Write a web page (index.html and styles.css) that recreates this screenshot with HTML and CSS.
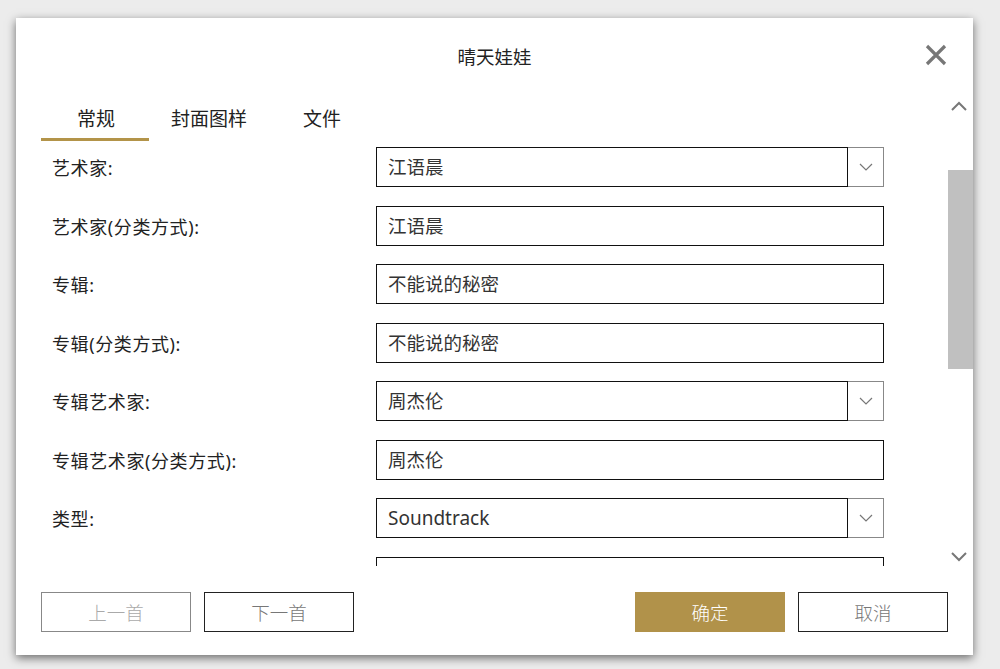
FILE: index.html
```html
<!DOCTYPE html>
<html lang="zh-CN">
<head>
  <meta charset="UTF-8" />
  <meta name="viewport" content="width=device-width, initial-scale=1.0" />
  <title>晴天娃娃</title>
  <link rel="stylesheet" href="styles.css">
</head>
<body>
  <div class="dialog">
    <div class="header">
      <div class="title">晴天娃娃</div>
      <div class="close">
        <svg width="22" height="22" viewBox="0 0 22 22"><path d="M2 2 L20 20 M20 2 L2 20" stroke="#777" stroke-width="3.2" fill="none"/></svg>
      </div>
    </div>

    <div class="main">
      <div class="content">
        <div class="tabs">
          <div class="tab active">常规</div>
          <div class="tab">封面图样</div>
          <div class="tab">文件</div>
        </div>

        <div class="form">
          <div class="row">
            <div class="label">艺术家:</div>
            <div class="combo"><div class="field">江语晨</div><div class="drop"><svg width="14" height="8" viewBox="0 0 14 8"><path d="M1 1 L7 7 L13 1" stroke="#777" stroke-width="1.2" fill="none"/></svg></div></div>
          </div>
          <div class="row">
            <div class="label">艺术家(分类方式):</div>
            <div class="field wide">江语晨</div>
          </div>
          <div class="row">
            <div class="label">专辑:</div>
            <div class="field wide">不能说的秘密</div>
          </div>
          <div class="row">
            <div class="label">专辑(分类方式):</div>
            <div class="field wide">不能说的秘密</div>
          </div>
          <div class="row">
            <div class="label">专辑艺术家:</div>
            <div class="combo"><div class="field">周杰伦</div><div class="drop"><svg width="14" height="8" viewBox="0 0 14 8"><path d="M1 1 L7 7 L13 1" stroke="#777" stroke-width="1.2" fill="none"/></svg></div></div>
          </div>
          <div class="row">
            <div class="label">专辑艺术家(分类方式):</div>
            <div class="field wide">周杰伦</div>
          </div>
          <div class="row">
            <div class="label">类型:</div>
            <div class="combo"><div class="field latin">Soundtrack</div><div class="drop"><svg width="14" height="8" viewBox="0 0 14 8"><path d="M1 1 L7 7 L13 1" stroke="#777" stroke-width="1.2" fill="none"/></svg></div></div>
          </div>
          <div class="row">
            <div class="label"></div>
            <div class="field wide"></div>
          </div>
        </div>
      </div>

      <div class="scrollbar">
        <svg class="arrow" width="18" height="10" viewBox="0 0 18 10"><path d="M2 9 L9 2 L16 9" stroke="#777" stroke-width="2" fill="none"/></svg>
        <div class="thumb"></div>
        <svg class="arrow down" width="18" height="10" viewBox="0 0 18 10"><path d="M2 1 L9 8 L16 1" stroke="#777" stroke-width="2" fill="none"/></svg>
      </div>
    </div>

    <div class="footer">
      <div class="nav">
        <button class="btn disabled">上一首</button>
        <button class="btn">下一首</button>
      </div>
      <div class="actions">
        <button class="btn primary">确定</button>
        <button class="btn">取消</button>
      </div>
    </div>
  </div>
</body>
</html>
```

FILE: styles.css
```css
body {
  margin: 0;
  padding: 18px 0 0 16px;
  background-color: #ececec;
  font-family: 'Noto Sans', 'Noto Sans CJK SC', sans-serif;
  color: #222;
  height: 669px;
  box-sizing: border-box;
  overflow: hidden;
}

.dialog {
  width: 957px;
  height: 637px;
  background: #fff;
  box-shadow: 0 3px 9px rgba(0,0,0,0.55);
  display: flex;
  flex-direction: column;
}

.header {
  height: 75px;
  display: flex;
  align-items: center;
  justify-content: center;
  position: relative;
}

.title {
  font-size: 18.5px;
  color: #222;
}

.close {
  position: absolute;
  right: 26px;
  top: 26px;
  width: 22px;
  height: 22px;
}

.main {
  flex: 1;
  display: flex;
  min-height: 0;
}

.content {
  flex: 1;
  padding-left: 25px;
  display: flex;
  flex-direction: column;
  min-height: 0;
}

.tabs {
  display: flex;
  gap: 56px;
  height: 50px;
  padding-left: 36px;
  font-size: 19px;
  box-sizing: border-box;
}

.tab {
  position: relative;
  line-height: 52px;
  height: 47px;
  color: #222;
}

.tab.active::after {
  content: "";
  position: absolute;
  left: -36px;
  right: -34px;
  bottom: -1px;
  height: 3px;
  background: #b39449;
}

.form {
  height: 423px;
  overflow: hidden;
  padding-top: 4px;
  box-sizing: border-box;
  display: flex;
  flex-direction: column;
  gap: 18.57px;
}

.row {
  display: flex;
  align-items: center;
  height: 40px;
  flex-shrink: 0;
}

.label {
  width: 324px;
  padding-left: 11px;
  font-size: 18px;
  letter-spacing: 0.6px;
  color: #222;
}

.field {
  height: 40px;
  box-sizing: border-box;
  border: 1px solid #111;
  padding-left: 11px;
  font-size: 18.5px;
  line-height: 38px;
  color: #333;
}

.field.wide {
  width: 508px;
}

.combo {
  display: flex;
  width: 508px;
}

.combo .field {
  width: 472px;
}

.field.latin {
  font-size: 19px;
}

.drop {
  width: 36px;
  height: 40px;
  box-sizing: border-box;
  border: 1px solid #888;
  border-left: none;
  display: flex;
  align-items: center;
  justify-content: center;
}

.scrollbar {
  width: 26px;
  height: 477px;
  display: flex;
  flex-direction: column;
  align-items: center;
}

.arrow {
  margin-top: 8px;
  margin-right: 2px;
}

.thumb {
  width: 25px;
  height: 199px;
  background: #c0c0c0;
  margin-top: 59px;
  margin-left: 1px;
}

.arrow.down {
  margin-top: auto;
  margin-bottom: 8px;
}

.footer {
  display: flex;
  justify-content: space-between;
  padding: 22px 25px 0 25px;
  height: 85px;
  box-sizing: border-box;
}

.nav,
.actions {
  display: flex;
  gap: 13px;
}

.btn {
  width: 150px;
  height: 40px;
  background: #fff;
  border: 1px solid #222;
  font-family: 'Noto Sans CJK SC', sans-serif;
  font-size: 18.5px;
  font-weight: 300;
  color: #777;
  cursor: pointer;
}

.btn.disabled {
  border-color: #888;
  color: #aaa;
}

.btn.primary {
  background: #b1924a;
  border-color: #b1924a;
  color: #fff;
}
```
